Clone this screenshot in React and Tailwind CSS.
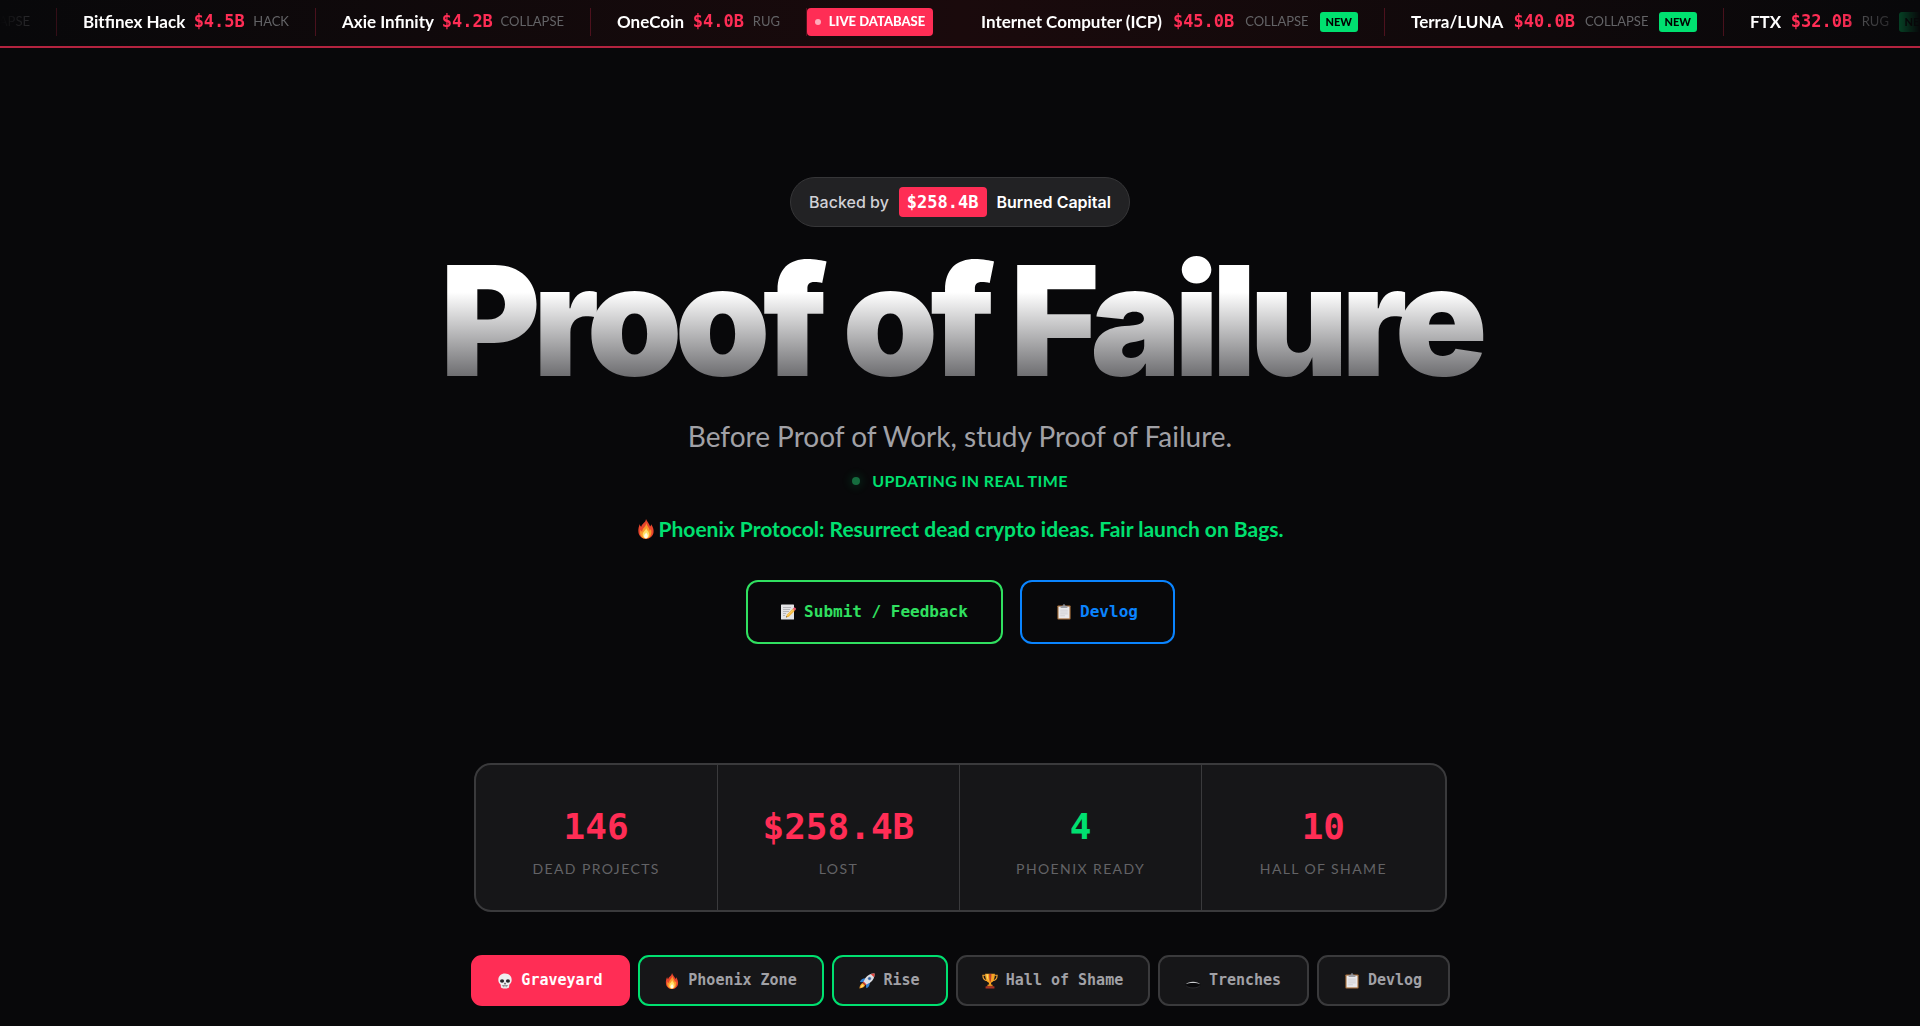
import React from "react";

function Flame({ className }) {
  return (
    <svg viewBox="0 0 16 18" className={className} aria-hidden="true">
      <path d="M8 0c.7 2.400 3 4 3.700 6.800.6-.5.9-1.200.9-2 1.700 2.500 2.500 4.700 2.200 7.200-.5 3.600-3.200 6-6.800 6s-6.300-2.400-6.800-6C.800 9.200 1.600 6.500 2.500 4.500c0 1.200.4 2 1.200 2.500C4.200 4 7.700 3.500 8 0z" fill="#e8452c" />
      <path d="M8.300 3.500c.3 2.500 2.700 4 3.100 7 .5-.3.8-.8 1-1.500 1.400 4-.4 8.600-4.600 8.600s-6.200-4-4.600-8c.3 1 .8 1.500 1.400 1.800C4.600 8 8 7 8.300 3.500z" fill="#fb9a2b" />
      <path d="M8.200 8c.2 2 2.700 3 2.700 5.800 0 2.300-1.200 3.700-2.900 3.700s-3-1.400-3-3.500C5 11.500 7.800 10.500 8.200 8z" fill="#ffe066" />
      <path d="M8.100 12c.2 1 1.500 1.700 1.500 3.200 0 1.400-.7 2.200-1.600 2.200s-1.700-.8-1.700-2.100c0-1.500 1.600-2 1.800-3.300z" fill="#fffbe6" />
    </svg>
  );
}

function Memo({ className }) {
  return (
    <svg viewBox="0 0 16 16" className={className} aria-hidden="true">
      <rect x="1" y="0.500" width="13" height="15" rx="0.600" fill="#e4e4e6" />
      <path d="M3 3.500h8M3 5.500h7M3 7.500h6M3 9.500h3M3 11.500h2" stroke="#a9a9ae" strokeWidth="0.800" />
      <path d="M6 13.500l.8-2.800 6-6 2 2-6 6z" fill="#f6b73c" />
      <path d="M7.500 11.700l6-6" stroke="#fbdc7a" strokeWidth="0.800" />
      <path d="M12.800 4.700l1-1c.4-.4 1-.3 1.400.1l.5.500c.4.4.4 1 0 1.400l-1 1z" fill="#e8556d" />
      <path d="M6 13.500l.4-1.400 1 1z" fill="#3c3c3c" />
    </svg>
  );
}

function Clipboard({ className }) {
  return (
    <svg viewBox="0 0 16 17" className={className} aria-hidden="true">
      <rect x="1" y="1.500" width="14" height="15" rx="1" fill="#a9713d" />
      <rect x="2.200" y="2.800" width="11.600" height="12.500" fill="#e9e9ec" />
      <path d="M4 6.500h8M4 8.500h8M4 10.500h8M4 12.500h5" stroke="#c9c9ce" strokeWidth="0.800" />
      <path d="M4.500 2h2c0-2.300 3-2.300 3 0h2v2.200h-7z" fill="#85868c" />
      <path d="M4.500 3.200h7" stroke="#c9cacf" strokeWidth="0.700" />
    </svg>
  );
}

function Skull({ className }) {
  return (
    <svg viewBox="0 0 16 18" className={className} aria-hidden="true">
      <path d="M8 .500c4.400 0 7.500 2.900 7.500 7 0 2-.5 3.400-1.700 4.500-.7.600-1 .9-1 1.600l-.2 2.200c-.1 1.100-1.600 1.700-4.600 1.700s-4.500-.6-4.600-1.700l-.2-2.200c0-.7-.3-1-1-1.600C1 10.900.500 9.500.500 7.500c0-4.100 3.100-7 7.500-7z" fill="#eeeef0" />
      <ellipse cx="4.700" cy="9" rx="2.300" ry="2" fill="#25252a" />
      <ellipse cx="11.300" cy="9" rx="2.300" ry="2" fill="#25252a" />
      <path d="M8 10.500l1.200 2.200H6.800z" fill="#3a3a40" />
      <path d="M4.500 14.200h7M6.200 13.500v2.500M8 13.500v2.500M9.800 13.500v2.500" stroke="#77777e" strokeWidth="0.700" />
    </svg>
  );
}

function Rocket({ className }) {
  return (
    <svg viewBox="0 0 18 18" className={className} aria-hidden="true">
      <path d="M5 10.500L1 10c.8-2.500 3-4.200 6.300-4.200zM7.800 13.200l.4 4c2.500-1 4-3.200 4-6.500z" fill="#2f7fd6" />
      <path d="M17.500.500c-4-.3-8 1.700-10.500 5.300L4.600 10.600l2.900 2.800 4.800-2.400C15.800 8.500 17.800 4.500 17.500.500z" fill="#dcdfe6" />
      <path d="M17.500.500c-1.500-.1-3 .1-4.400.6l3.800 3.800c.5-1.400.7-2.900.6-4.400z" fill="#e2453c" />
      <circle cx="11.800" cy="6.200" r="1.700" fill="#2a5fa8" stroke="#8e949f" strokeWidth="0.600" />
      <path d="M5.200 9.600l3.200 3.200-1.400 1-2.800-2.800z" fill="#d8372f" />
      <path d="M4.200 11.300l2.600 2.600c-.8 2.200-3 3.300-6.300 3.600.2-3.200 1.500-5.500 3.700-6.200z" fill="#f9a12e" />
      <path d="M4.200 12.900l1.100 1.100c-.6 1.200-1.600 1.800-3.300 2.200.3-1.700 1-2.900 2.200-3.300z" fill="#ffe26b" />
    </svg>
  );
}

function Trophy({ className }) {
  return (
    <svg viewBox="0 0 18 18" className={className} aria-hidden="true">
      <path d="M4 2.500H1c0 4 2 5.800 5 6.200M14 2.500h3c0 4-2 5.800-5 6.200" fill="none" stroke="#f0a030" strokeWidth="1.300" />
      <path d="M3.500.800h11c0 5-1.400 9.200-4.300 10.200v2.500H7.800V11C4.900 10 3.500 5.800 3.500.800z" fill="#f6a623" />
      <path d="M8 1h2.600c0 4-.4 7.600-1.400 9.600C8.300 8.600 8 5 8 1z" fill="#c4402a" />
      <path d="M5 1.500h1.600c.1 3 .5 5.500 1 7.500C6 7.600 5.100 5 5 1.500z" fill="#fdd66b" />
      <path d="M6.500 13h5l.8 2.200H5.700z" fill="#e08a1e" />
      <rect x="4" y="15" width="10" height="2.500" rx="0.400" fill="#a93324" />
    </svg>
  );
}

function Hole({ className }) {
  return (
    <svg viewBox="0 0 16 16" className={className} aria-hidden="true">
      <ellipse cx="8" cy="12" rx="7.500" ry="3" fill="#08080a" />
      <path d="M.8 11.300C2 9.500 4.800 8.700 8 8.700s6 .8 7.200 2.600C13.500 10.300 11 9.900 8 9.900s-5.500.4-7.200 1.400z" fill="#c9cbce" />
      <path d="M.8 12.500c1.500 1.700 4.200 2.400 7.200 2.400s5.700-.7 7.200-2.400" fill="none" stroke="#3c3d40" strokeWidth="0.600" />
    </svg>
  );
}

const before = [
  { name: "Bitfinex Hack", amount: "$4.5B", type: "HACK", width: "w-[259px]" },
  { name: "Axie Infinity", amount: "$4.2B", type: "COLLAPSE", width: "w-[275px]" },
  { name: "OneCoin", amount: "$4.0B", type: "RUG", width: "w-[216px]" },
];

const after = [
  { name: "Internet Computer (ICP)", amount: "$45.0B", type: "COLLAPSE", fresh: true, width: "w-[430px]" },
  { name: "Terra/LUNA", amount: "$40.0B", type: "COLLAPSE", fresh: true, width: "w-[339px]" },
  { name: "FTX", amount: "$32.0B", type: "RUG", fresh: true, width: "w-[240px]" },
];

function TickerItem({ item }) {
  return (
    <li className={`flex h-7 shrink-0 items-center justify-between border-r border-[#ff2d55]/25 px-[26px] ${item.width}`}>
      <span className="text-[17px] font-bold text-white">{item.name}</span>
      <span className="font-['DejaVu_Sans_Mono',monospace] text-[17px] font-bold text-[#ff2d55]">{item.amount}</span>
      <span className="text-[13px] text-[#636366]">{item.type}</span>
      {item.fresh && (
        <span className="rounded-[3px] bg-[#00e070] px-[6px] text-[11px] leading-5 font-black text-black">NEW</span>
      )}
    </li>
  );
}

function Ticker() {
  return (
    <header className="flex h-12 items-center overflow-hidden border-b-2 border-[#b3233f] bg-linear-to-r from-[#08080a] via-[#1a0a0c] to-[#08080a] pb-[2px] whitespace-nowrap">
      <ul className="flex min-w-0 grow items-center mask-[linear-gradient(90deg,transparent,black_80px,black_calc(100%-80px),transparent)]">
        <li className="flex h-7 w-[57px] shrink-0 items-center justify-end border-r border-[#ff2d55]/25 pr-[26px] text-[13px] text-[#636366]">
          COLLAPSE
        </li>
        {before.map((item) => (
          <TickerItem key={item.name} item={item} />
        ))}
        <li className="mr-[22px] flex h-7 w-[126px] shrink-0 items-center justify-center gap-2 rounded bg-[#ff2d55] text-[13px] font-black text-white">
          <span className="size-[6px] rounded-full bg-white/60" />
          LIVE DATABASE
        </li>
        {after.map((item) => (
          <TickerItem key={item.name} item={item} />
        ))}
      </ul>
    </header>
  );
}

const stats = [
  { value: "146", label: "DEAD PROJECTS", color: "text-[#ff2d55]" },
  { value: "$258.4B", label: "LOST", color: "text-[#ff2d55]" },
  { value: "4", label: "PHOENIX READY", color: "text-[#00e070]" },
  { value: "10", label: "HALL OF SHAME", color: "text-[#ff2d55]" },
];

const tabs = [
  { label: "Graveyard", Icon: Skull, look: "w-[159px] border-[#ff2d55] bg-[#ff2d55] text-white" },
  { label: "Phoenix Zone", Icon: Flame, look: "w-[186px] border-[#00e070] bg-[#161618] text-[#a1a1a6]" },
  { label: "Rise", Icon: Rocket, look: "w-[116px] border-[#00e070] bg-[#161618] text-[#a1a1a6]" },
  { label: "Hall of Shame", Icon: Trophy, look: "w-[194px] border-[#3a3a3c] bg-[#161618] text-[#a1a1a6]" },
  { label: "Trenches", Icon: Hole, look: "w-[151px] border-[#3a3a3c] bg-[#161618] text-[#a1a1a6]" },
  { label: "Devlog", Icon: Clipboard, look: "w-[133px] border-[#3a3a3c] bg-[#161618] text-[#a1a1a6]" },
];

export default function App() {
  return (
    <div className="min-h-screen overflow-hidden bg-[#08080a] font-[Lato,sans-serif] text-white">
      <Ticker />
      <main className="flex flex-col items-center px-6 pt-[129px] pb-5">
        <p className="flex h-[50px] items-center gap-[10px] rounded-full border border-[#363638] bg-[#222224] px-[18px] font-[Inter,sans-serif] text-[16px]">
          <span className="font-medium text-[#d1d1d6]">Backed by</span>
          <span className="rounded bg-[#ff2d55] px-2 font-['DejaVu_Sans_Mono',monospace] text-[17px] leading-[30px] font-bold">$258.4B</span>
          <span className="font-semibold">Burned Capital</span>
        </p>

        <h1 className="mt-[14px] bg-[linear-gradient(180deg,#ffffff_0%,#ffffff_32%,#434347_100%)] bg-clip-text px-4 font-[Inter,sans-serif] text-[153px] leading-[160px] font-black tracking-tighter text-transparent">
          Proof of Failure
        </h1>

        <p className="mt-[17px] text-[28px] leading-9 text-[#a1a1a6]">Before Proof of Work, study Proof of Failure.</p>

        <p className="mt-[15px] flex items-center gap-3 text-[16px] leading-6 font-bold tracking-wide text-[#00e070]">
          <span className="size-2 rounded-full bg-[#156c3e] shadow-[0_0_10px_2px_rgba(0,224,112,0.15)]" />
          UPDATING IN REAL TIME
        </p>

        <p className="mt-[22px] flex items-center gap-1 text-[21px] leading-7 font-bold text-[#00e070]">
          <Flame className="h-5 w-[18px]" />
          Phoenix Protocol: Resurrect dead crypto ideas. Fair launch on Bags.
        </p>

        <div className="mt-[37px] flex gap-[17px] font-['DejaVu_Sans_Mono',monospace] text-[16px] font-bold">
          <button className="flex h-16 w-[257px] items-center justify-center gap-2 rounded-xl border-2 border-[#30e060] text-[#30e060]">
            <Memo className="size-4" />
            Submit / Feedback
          </button>
          <button className="flex h-16 w-[155px] items-center justify-center gap-2 rounded-xl border-2 border-[#0a84ff] text-[#0a84ff]">
            <Clipboard className="size-4" />
            Devlog
          </button>
        </div>

        <dl className="mt-[119px] grid w-full max-w-[973px] grid-cols-4 divide-x divide-[#3a3a3c] rounded-[17px] border-2 border-[#3a3a3c] bg-[#161618]">
          {stats.map((s) => (
            <div key={s.label} className="flex flex-col-reverse items-center gap-[9px] pt-[39px] pb-[31px]">
              <dt className="text-[14px] leading-5 tracking-widest text-[#636366]">{s.label}</dt>
              <dd className={`font-['DejaVu_Sans_Mono',monospace] text-[36px] leading-[46px] font-bold ${s.color}`}>{s.value}</dd>
            </div>
          ))}
        </dl>

        <nav className="mt-[43px] flex gap-2 font-['DejaVu_Sans_Mono',monospace] text-[15px] font-bold whitespace-nowrap">
          {tabs.map(({ label, Icon, look }) => (
            <button key={label} className={`flex h-[51px] shrink-0 items-center justify-center gap-2 rounded-[11px] border-2 ${look}`}>
              <Icon className="size-4 shrink-0" />
              {label}
            </button>
          ))}
        </nav>
      </main>
    </div>
  );
}
